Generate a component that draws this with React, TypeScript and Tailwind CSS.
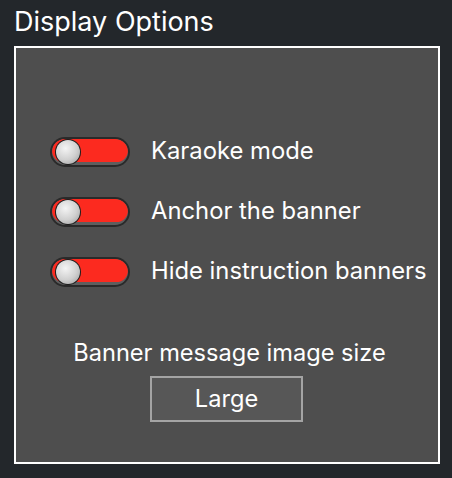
import React from "react";

function Toggle() {
  return (
    <div className="relative w-[80px] h-[30px] rounded-full bg-[#2a2a2a] p-[2px] shrink-0">
      <div className="relative w-full h-full rounded-full bg-[#5e5e5e] overflow-hidden">
        <div className="absolute left-0 right-0 top-0 bottom-[3px] rounded-full bg-[#fc2a1f]" />
        <div className="absolute left-[3px] top-[0px] w-[26px] h-[26px] rounded-full bg-[#1e1e1e] p-[1px]">
          <div className="w-full h-full rounded-full bg-[radial-gradient(circle_at_40%_35%,#f4f4f4_0%,#cfcfcf_55%,#9a9a9a_100%)]" />
        </div>
      </div>
    </div>
  );
}

function Row({ label }: { label: string }) {
  return (
    <div className="flex items-center h-[30px]">
      <Toggle />
      <span className="ml-[21px] text-[23.8px] text-white leading-none -mt-[3px]">{label}</span>
    </div>
  );
}

export default function App() {
  return (
    <div
      className="w-[452px] h-[478px] bg-[#23272b] text-white"
      style={{ fontFamily: "Inter, 'Liberation Sans', sans-serif" }}
    >
      <div className="pl-[14px] pt-[6px] h-[46px] text-[27px] leading-[32px]">Display Options</div>
      <div className="ml-[14px] w-[426px] h-[418px] border-2 border-white bg-[#4e4e4e]">
        <div className="flex flex-col gap-[30px] pl-[34px] pt-[89px]">
          <Row label="Karaoke mode" />
          <Row label="Anchor the banner" />
          <Row label="Hide instruction banners" />
        </div>
        <div className="flex flex-col items-center mt-[52px]">
          <div className="text-[23.6px] leading-[28px] ml-[5px]">Banner message image size</div>
          <div className="mt-[9px] w-[153px] h-[46px] border-2 border-[#a4a4a4] bg-[#575757] flex items-center justify-center text-[23.6px] -ml-[1px]">
            Large
          </div>
        </div>
      </div>
    </div>
  );
}
